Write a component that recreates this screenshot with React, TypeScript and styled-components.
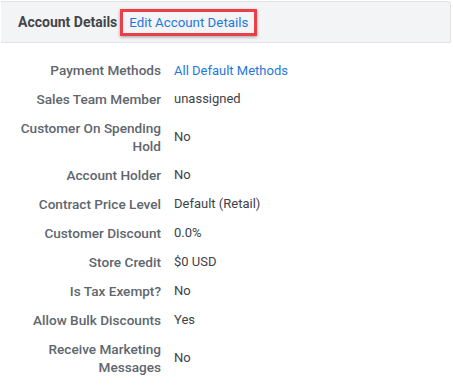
import * as React from 'react';
import styled, { createGlobalStyle } from 'styled-components';

const GlobalStyle = createGlobalStyle`
  html, body {
    margin: 0;
    padding: 0;
    background: #ffffff;
    font-family: Roboto, 'Liberation Sans', Arial, sans-serif;
  }
`;

interface DetailRow {
  label: string;
  value: string;
  link?: boolean;
}

const rows: DetailRow[] = [
  { label: 'Payment Methods', value: 'All Default Methods', link: true },
  { label: 'Sales Team Member', value: 'unassigned' },
  { label: 'Customer On Spending Hold', value: 'No' },
  { label: 'Account Holder', value: 'No' },
  { label: 'Contract Price Level', value: 'Default (Retail)' },
  { label: 'Customer Discount', value: '0.0%' },
  { label: 'Store Credit', value: '$0 USD' },
  { label: 'Is Tax Exempt?', value: 'No' },
  { label: 'Allow Bulk Discounts', value: 'Yes' },
  { label: 'Receive Marketing Messages', value: 'No' },
];

const Panel = styled.section`
  width: 450px;
  padding: 1px 0 0 1px;
`;

const Header = styled.header`
  display: flex;
  align-items: center;
  gap: 3px;
  height: 40px;
  padding-left: 17px;
  background: #f3f4f6;
  border: 1px solid #e1e3e6;
  border-left: none;
  border-radius: 0 4px 0 0;
`;

const Title = styled.h2`
  margin: 0;
  font-size: 14px;
  font-weight: 700;
  color: #434649;
`;

const Highlight = styled.span`
  display: inline-flex;
  align-items: center;
  margin-top: 1px;
  padding: 2px 6px;
  border: 3px solid #ec3e48;
  box-shadow: 0 1px 3px rgba(0, 0, 0, 0.35);
`;

const Link = styled.a<{ $size?: number }>`
  color: #1f78de;
  text-decoration: none;
  font-size: ${p => p.$size || 13}px;
  line-height: 17px;
  cursor: pointer;
`;

const Grid = styled.dl`
  display: grid;
  grid-template-columns: 150px 1fr;
  column-gap: 13px;
  margin: 0;
  padding: 12.5px 0 0 10px;
  font-size: 13px;
  line-height: 18px;
`;

const Label = styled.dt`
  text-align: right;
  font-size: 13.6px;
  font-weight: 500;
  color: #60666e;
  padding: 5.5px 0;
  display: flex;
  align-items: center;
  justify-content: flex-end;
`;

const Value = styled.dd`
  margin: 0;
  color: #3e4246;
  display: flex;
  align-items: center;
  padding: 5.5px 0;
`;

const App: React.FC = () => (
  <Panel>
    <GlobalStyle />
    <Header>
      <Title>Account Details</Title>
      <Highlight>
        <Link $size={13.3}>Edit Account Details</Link>
      </Highlight>
    </Header>
    <Grid>
      {rows.map(row => (
        <React.Fragment key={row.label}>
          <Label>{row.label}</Label>
          <Value>{row.link ? <Link>{row.value}</Link> : row.value}</Value>
        </React.Fragment>
      ))}
    </Grid>
  </Panel>
);

export default App;
